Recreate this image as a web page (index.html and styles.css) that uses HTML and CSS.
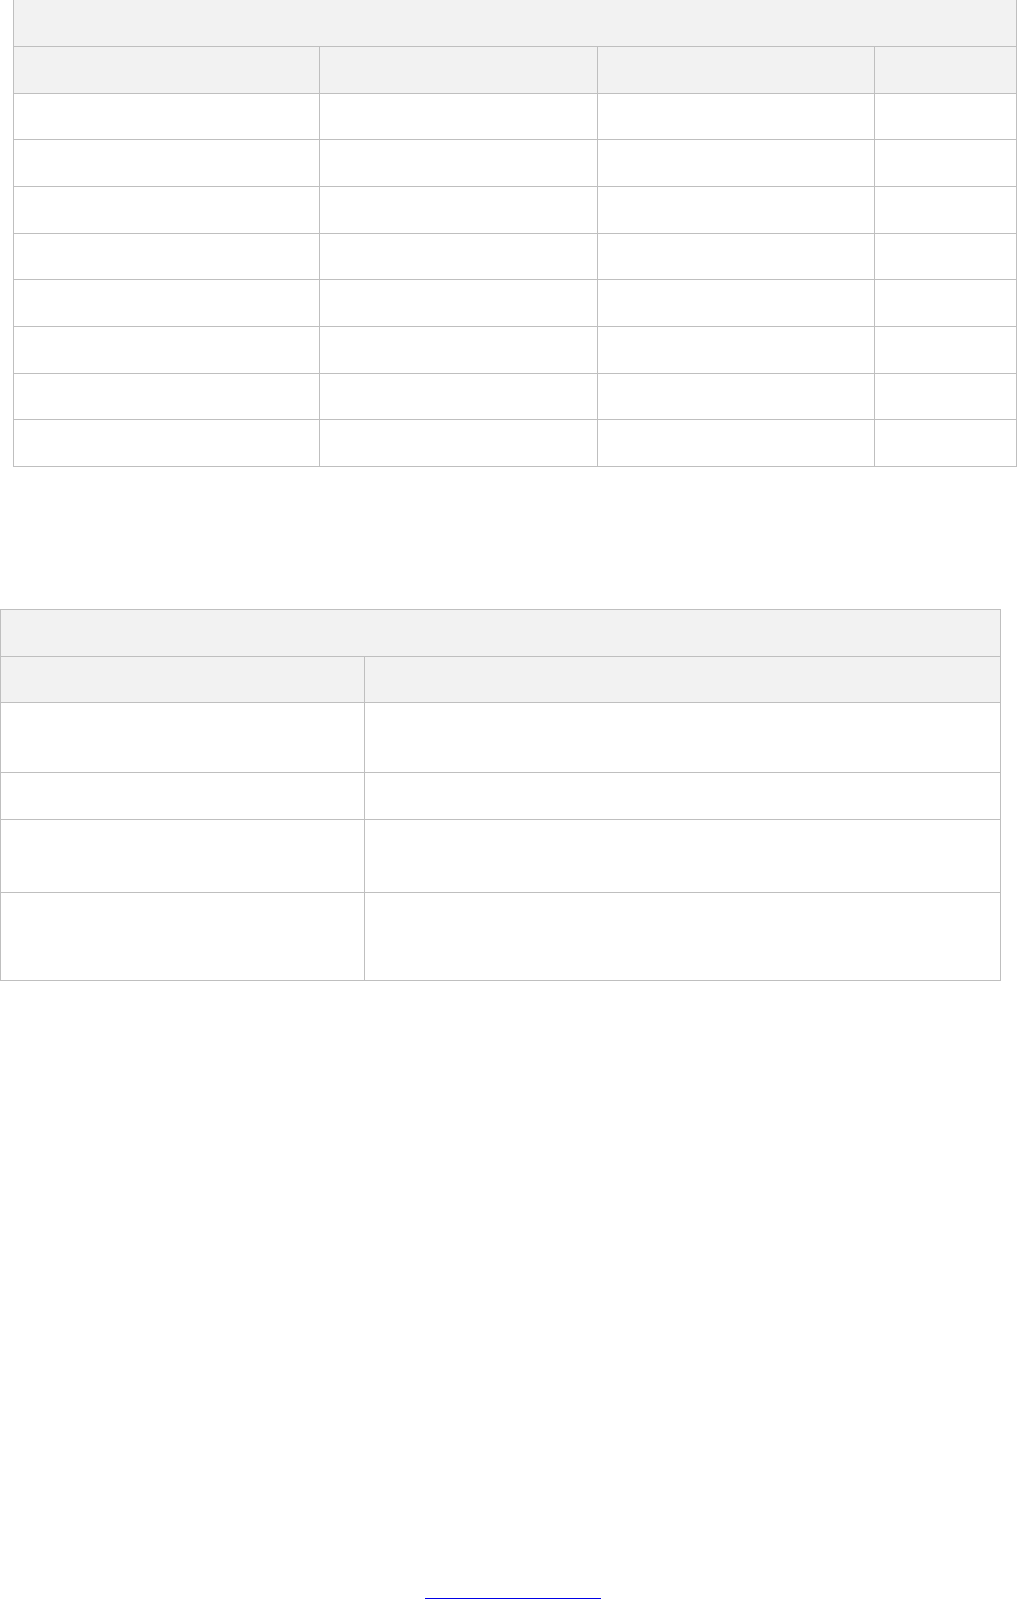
FILE: index.html
```html
<!DOCTYPE html>
<html lang="en">

<head>
	<meta charset="UTF-8">
	<meta name="viewport" content="width=device-width, initial-scale=1.0">
	<title>Tables</title>
	<link rel="stylesheet" href="styles.css">
</head>

<body>
	<div class="page">
		<table class="grid grid-wide">
			<colgroup>
				<col class="c1">
				<col class="c2">
				<col class="c3">
				<col class="c4">
			</colgroup>
			<thead>
				<tr class="row">
					<th colspan="4"></th>
				</tr>
				<tr class="row">
					<th></th>
					<th></th>
					<th></th>
					<th></th>
				</tr>
			</thead>
			<tbody>
				<tr class="row"><td></td><td></td><td></td><td></td></tr>
				<tr class="row"><td></td><td></td><td></td><td></td></tr>
				<tr class="row"><td></td><td></td><td></td><td></td></tr>
				<tr class="row"><td></td><td></td><td></td><td></td></tr>
				<tr class="row"><td></td><td></td><td></td><td></td></tr>
				<tr class="row"><td></td><td></td><td></td><td></td></tr>
				<tr class="row"><td></td><td></td><td></td><td></td></tr>
				<tr class="row"><td></td><td></td><td></td><td></td></tr>
			</tbody>
		</table>

		<table class="grid grid-pair">
			<colgroup>
				<col class="k1">
				<col class="k2">
			</colgroup>
			<thead>
				<tr class="row">
					<th colspan="2"></th>
				</tr>
				<tr class="row">
					<th></th>
					<th></th>
				</tr>
			</thead>
			<tbody>
				<tr class="row-2"><td></td><td></td></tr>
				<tr class="row"><td></td><td></td></tr>
				<tr class="row-3"><td></td><td></td></tr>
				<tr class="row-4"><td></td><td></td></tr>
			</tbody>
		</table>

		<div class="footer">
			<a class="footer-link" href="#top"></a>
		</div>
	</div>
</body>

</html>
```

FILE: styles.css
```css
* {
	margin: 0;
	padding: 0;
	box-sizing: border-box;
}

html,
body {
	background: #fff;
	font-family: 'Liberation Sans', Arial, sans-serif;
	font-size: 14px;
	color: #000;
}

.page {
	display: flex;
	flex-direction: column;
	align-items: flex-start;
}

.grid {
	border-collapse: collapse;
	table-layout: fixed;
}

.grid th,
.grid td {
	border: 1px solid #bfbfbf;
	padding: 0;
}

.grid th {
	background: #f2f2f2;
}

.row {
	height: 46.667px;
}

.row-2 {
	height: 70px;
}

.row-3 {
	height: 73.333px;
}

.row-4 {
	height: 88px;
}

.grid-wide {
	margin: -0.667px 0 0 13px;
	width: 1004px;
}

.c1 { width: 306px; }
.c2 { width: 278px; }
.c3 { width: 277px; }
.c4 { width: 142px; }

.grid-pair {
	margin-top: 142px;
	width: 1001px;
}

.k1 { width: 364px; }
.k2 { width: 636px; }

.footer {
	margin: 617px 0 0 425px;
	width: 176px;
	height: 1px;
}

.footer-link {
	display: block;
	height: 1px;
	background: #0000e6;
}
```
